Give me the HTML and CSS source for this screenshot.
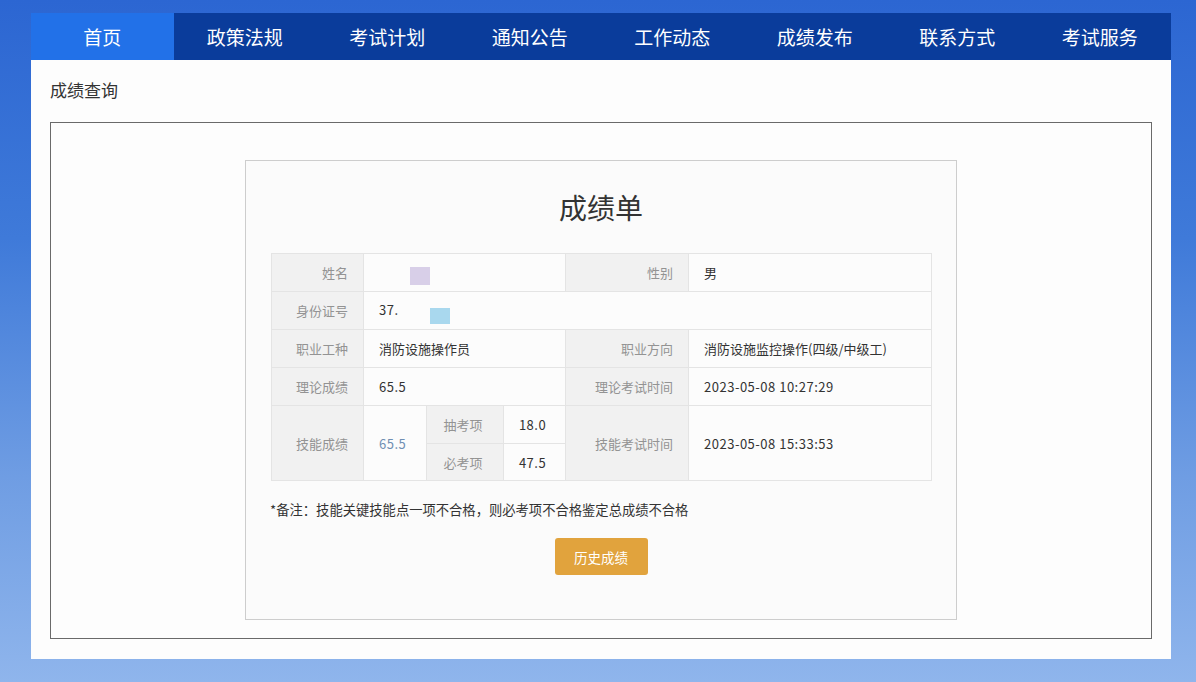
FILE: index.html
```html
<!DOCTYPE html>
<html lang="zh-CN">
<head>
<meta charset="utf-8">
<title>成绩查询</title>
<link rel="stylesheet" href="styles.css">
</head>
<body>
<div class="page">
  <nav class="nav">
    <a class="nav-item active">首页</a>
    <a class="nav-item">政策法规</a>
    <a class="nav-item">考试计划</a>
    <a class="nav-item">通知公告</a>
    <a class="nav-item">工作动态</a>
    <a class="nav-item">成绩发布</a>
    <a class="nav-item">联系方式</a>
    <a class="nav-item">考试服务</a>
  </nav>
  <main class="main">
    <h2 class="crumb">成绩查询</h2>
    <section class="frame">
      <div class="card">
        <h1 class="card-title">成绩单</h1>
        <table class="score">
          <colgroup>
            <col class="w92"><col class="w63"><col class="w77"><col class="w62"><col class="w123"><col class="w243">
          </colgroup>
          <tr class="row">
            <th>姓名</th>
            <td colspan="3"><span class="mask mask-purple"></span></td>
            <th>性别</th>
            <td>男</td>
          </tr>
          <tr class="row">
            <th>身份证号</th>
            <td colspan="5" class="num">37.<span class="mask mask-blue"></span></td>
          </tr>
          <tr class="row">
            <th>职业工种</th>
            <td colspan="3">消防设施操作员</td>
            <th>职业方向</th>
            <td>消防设施监控操作(四级/中级工)</td>
          </tr>
          <tr class="row">
            <th>理论成绩</th>
            <td colspan="3" class="num">65.5</td>
            <th>理论考试时间</th>
            <td class="num">2023-05-08 10:27:29</td>
          </tr>
          <tr class="row">
            <th rowspan="2">技能成绩</th>
            <td rowspan="2" class="skill num">65.5</td>
            <th class="sub">抽考项</th>
            <td class="center num">18.0</td>
            <th rowspan="2">技能考试时间</th>
            <td rowspan="2" class="num">2023-05-08 15:33:53</td>
          </tr>
          <tr class="row row-last">
            <th class="sub">必考项</th>
            <td class="center num">47.5</td>
          </tr>
        </table>
        <p class="note">*备注：技能关键技能点一项不合格，则必考项不合格鉴定总成绩不合格</p>
        <div class="actions"><button class="btn">历史成绩</button></div>
      </div>
    </section>
  </main>
</div>
</body>
</html>
```

FILE: styles.css
```css
html, body {
  margin: 0;
  padding: 0;
}
body {
  min-height: 682px;
  background: linear-gradient(180deg, #2c66d2 0%, #3f7ad9 35%, #6f9de3 70%, #8fb5ec 100%);
  font-family: "Microsoft YaHei", "Noto Sans CJK SC", "Noto Sans", sans-serif;
  color: #333;
}
.page {
  width: 1140px;
  margin-left: 31px;
  padding-top: 13px;
}
.nav {
  display: flex;
  height: 47px;
  background: #0a3c9b;
}
.nav-item {
  flex: 1;
  display: flex;
  align-items: center;
  justify-content: center;
  color: #fff;
  font-size: 19px;
}
.nav-item.active {
  background: #2271e8;
}
.main {
  background: #fdfdfd;
  height: 599px;
  box-sizing: border-box;
  padding: 0 19px 20px;
}
.crumb {
  margin: 0;
  height: 62px;
  box-sizing: border-box;
  padding-bottom: 3px;
  display: flex;
  align-items: center;
  font-size: 17px;
  font-weight: normal;
  color: #333;
}
.frame {
  height: 517px;
  box-sizing: border-box;
  border: 1px solid #6a6a6a;
  padding-top: 37px;
  display: flex;
  justify-content: center;
  align-items: flex-start;
}
.card {
  width: 712px;
  height: 460px;
  box-sizing: border-box;
  border: 1px solid #cdcdcd;
  background: #fbfbfb;
  padding: 0 25px;
}
.card-title {
  margin: 0;
  height: 92px;
  display: flex;
  align-items: center;
  justify-content: center;
  font-size: 28px;
  font-weight: normal;
  color: #333;
}
.score {
  width: 660px;
  border-collapse: collapse;
  table-layout: fixed;
  font-size: 13px;
}
.w92 { width: 92px; }
.w63 { width: 63px; }
.w77 { width: 77px; }
.w62 { width: 62px; }
.w123 { width: 123px; }
.w243 { width: 243px; }
.score .row {
  height: 38px;
}
.score .row-last {
  height: 37px;
}
.score th, .score td {
  border: 1px solid #e4e4e4;
  padding: 0;
}
.score th {
  background: #f1f1f1;
  color: #939393;
  font-weight: normal;
  text-align: right;
  padding-right: 15px;
}
.score th.sub {
  text-align: center;
  padding-right: 4px;
}
.score td {
  background: #fcfcfc;
  color: #333;
  text-align: left;
  padding-left: 15px;
}
.score td.num {
  letter-spacing: 0.5px;
}
.score td.center {
  text-align: center;
  padding-left: 0;
  padding-right: 4px;
}
.score td.skill {
  color: #6f8fb3;
}
.mask {
  display: inline-block;
  vertical-align: middle;
  width: 20px;
}
.mask-purple {
  height: 18px;
  margin-left: 31px;
  margin-top: 6px;
  background: #d8cfe8;
}
.mask-blue {
  height: 16px;
  margin-left: 31px;
  margin-top: 10px;
  background: #a9d8ee;
}
.note {
  margin: 19px 0 0 -1px;
  font-size: 13.3px;
  line-height: 20px;
  color: #333;
}
.actions {
  display: flex;
  justify-content: center;
  margin-top: 18px;
}
.btn {
  width: 93px;
  height: 37px;
  border: 0;
  border-radius: 3px;
  background: #e1a33d;
  color: #fff;
  font-family: inherit;
  font-size: 13.5px;
  padding: 0;
}
```
